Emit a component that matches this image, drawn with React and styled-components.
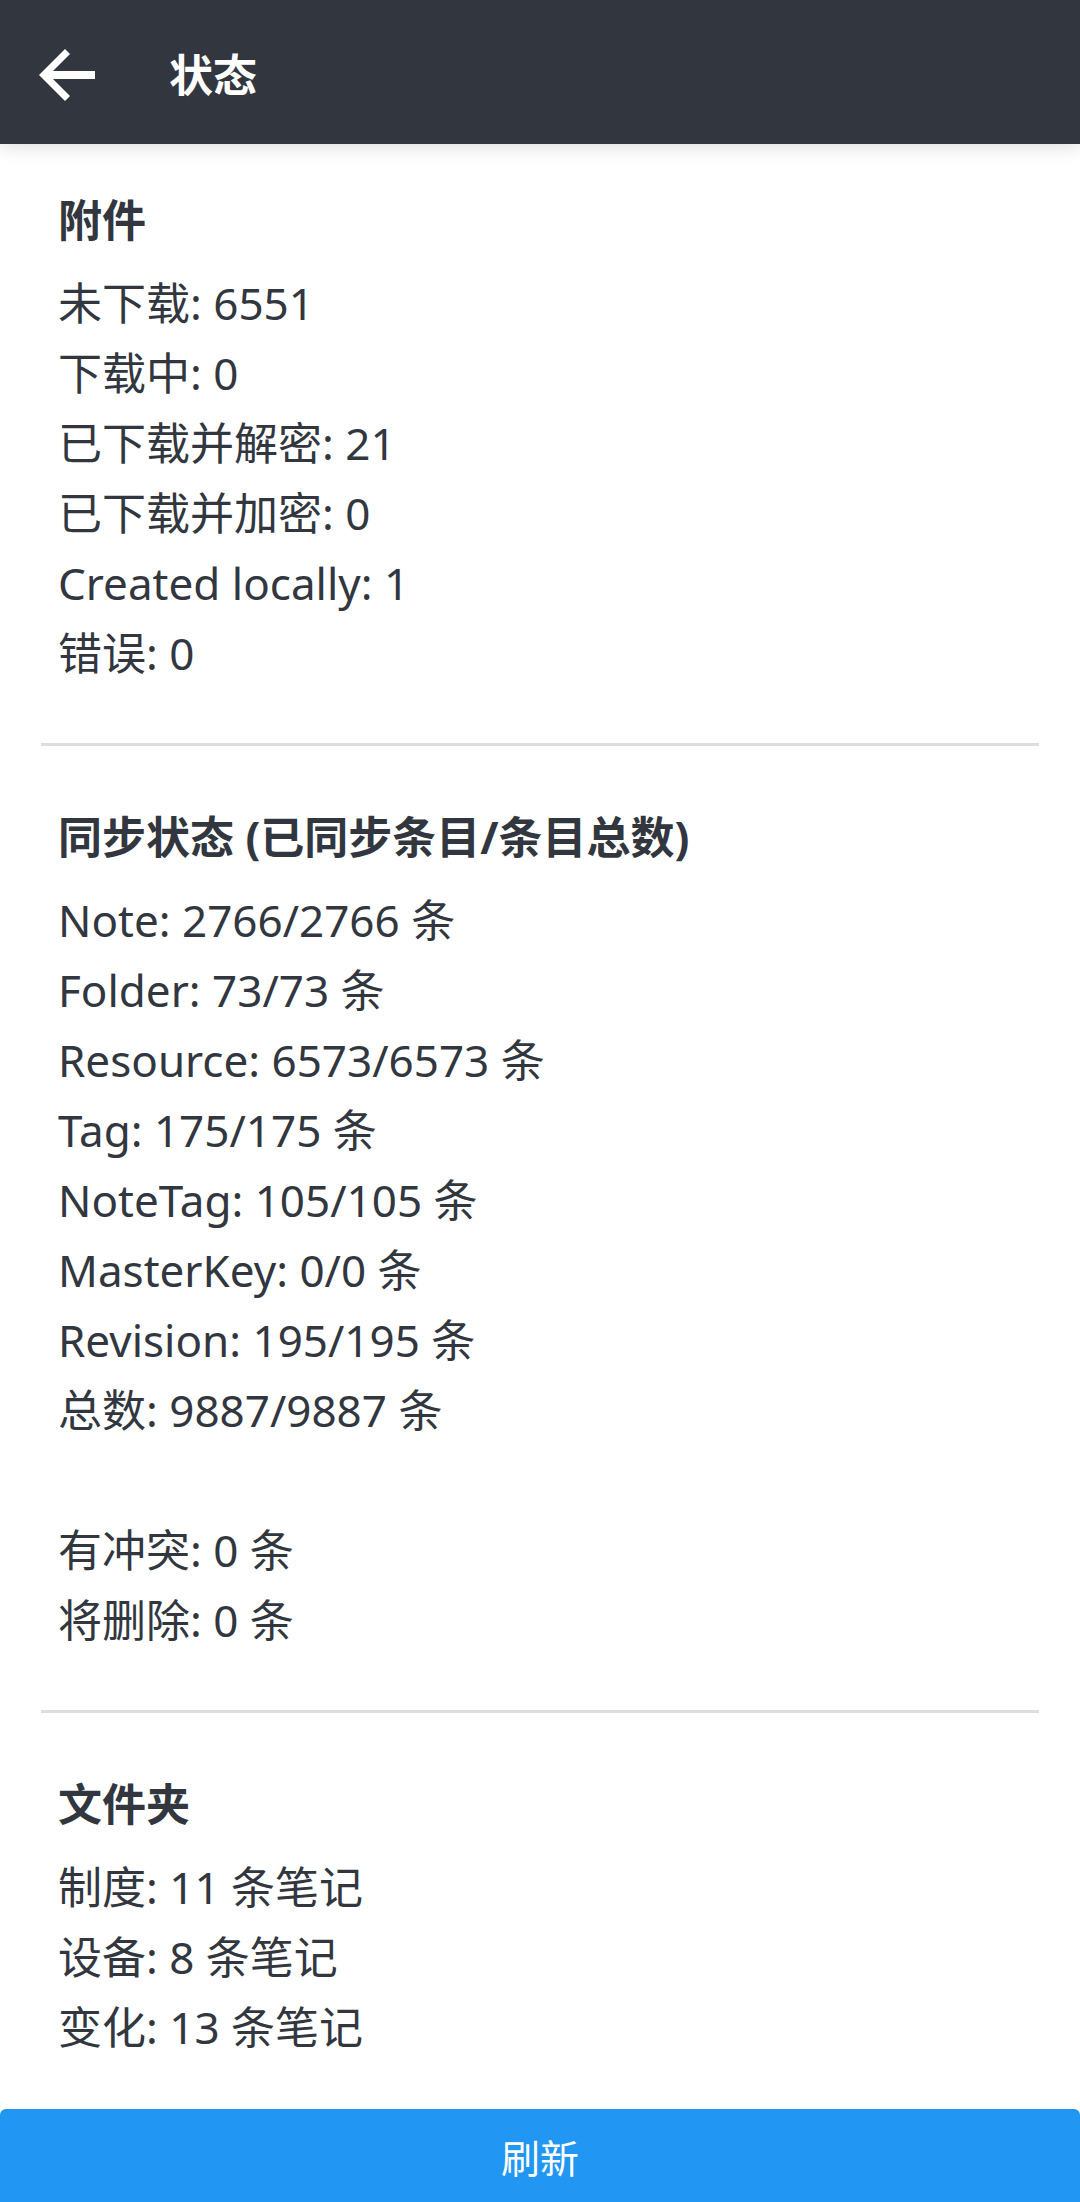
import React from "react";
import styled, { createGlobalStyle } from "styled-components";

const GlobalStyle = createGlobalStyle`
  * {
    box-sizing: border-box;
  }

  body {
    margin: 0;
    background: #ffffff;
    color: #32373f;
    font-family: "Noto Sans", "Noto Sans CJK SC", sans-serif;
    font-size: 44px;
    line-height: 70px;
  }
`;

const Screen = styled.div`
  display: flex;
  flex-direction: column;
  min-height: 100vh;
`;

const Header = styled.header`
  display: flex;
  align-items: center;
  gap: 74px;
  height: 144px;
  padding: 5px 39px 0;
  background: #32363f;
  color: #ffffff;
  box-shadow: 0 2px 18px rgba(0, 0, 0, 0.15);
`;

const BackButton = styled.button`
  display: flex;
  padding: 0;
  border: 0;
  background: none;
  color: inherit;
  cursor: pointer;
`;

const Title = styled.h1`
  margin: 0;
  font-size: 44px;
  font-weight: 700;
`;

const Content = styled.main`
  flex: 1;
  padding: 0 41px;
`;

const Section = styled.section`
  padding: ${(p) => (p.$first ? 41 : 56)}px 17px ${(p) => (p.$last ? 45 : 55)}px;
  border-bottom: ${(p) => (p.$last ? "0" : "3px solid #dddddd")};
`;

const SectionTitle = styled.h2`
  margin: 0 0 13px;
  font-size: 44px;
  font-weight: 700;
`;

const Groups = styled.div`
  display: flex;
  flex-direction: column;
  gap: 70px;
`;

const List = styled.ul`
  margin: 0;
  padding: 0;
  list-style: none;
`;

const Footer = styled.footer`
  position: sticky;
  bottom: 0;
`;

const RefreshButton = styled.button`
  display: block;
  width: 100%;
  height: 93px;
  padding: 4px 0 0;
  border: 0;
  border-radius: 6px 6px 0 0;
  background: #2196f3;
  color: #ffffff;
  font-family: inherit;
  font-size: 39px;
  line-height: 56px;
  cursor: pointer;
`;

const sections = [
  {
    title: "附件",
    groups: [
      [
        "未下载: 6551",
        "下载中: 0",
        "已下载并解密: 21",
        "已下载并加密: 0",
        "Created locally: 1",
        "错误: 0",
      ],
    ],
  },
  {
    title: "同步状态 (已同步条目/条目总数)",
    groups: [
      [
        "Note: 2766/2766 条",
        "Folder: 73/73 条",
        "Resource: 6573/6573 条",
        "Tag: 175/175 条",
        "NoteTag: 105/105 条",
        "MasterKey: 0/0 条",
        "Revision: 195/195 条",
        "总数: 9887/9887 条",
      ],
      ["有冲突: 0 条", "将删除: 0 条"],
    ],
  },
  {
    title: "文件夹",
    groups: [["制度: 11 条笔记", "设备: 8 条笔记", "变化: 13 条笔记"]],
  },
];

function BackIcon() {
  return (
    <svg width="56" height="52" viewBox="0 0 56 52" fill="currentColor" aria-hidden="true">
      <path d="M0 26 26 0l5 5-17 17h42v8H14l17 17-5 5z" />
    </svg>
  );
}

export default function App() {
  return (
    <Screen lang="zh-CN">
      <GlobalStyle />
      <Header>
        <BackButton type="button" aria-label="返回">
          <BackIcon />
        </BackButton>
        <Title>状态</Title>
      </Header>
      <Content>
        {sections.map((section, i) => (
          <Section key={section.title} $first={i === 0} $last={i === sections.length - 1}>
            <SectionTitle>{section.title}</SectionTitle>
            <Groups>
              {section.groups.map((rows) => (
                <List key={rows[0]}>
                  {rows.map((row) => (
                    <li key={row}>{row}</li>
                  ))}
                </List>
              ))}
            </Groups>
          </Section>
        ))}
      </Content>
      <Footer>
        <RefreshButton type="button">刷新</RefreshButton>
      </Footer>
    </Screen>
  );
}
